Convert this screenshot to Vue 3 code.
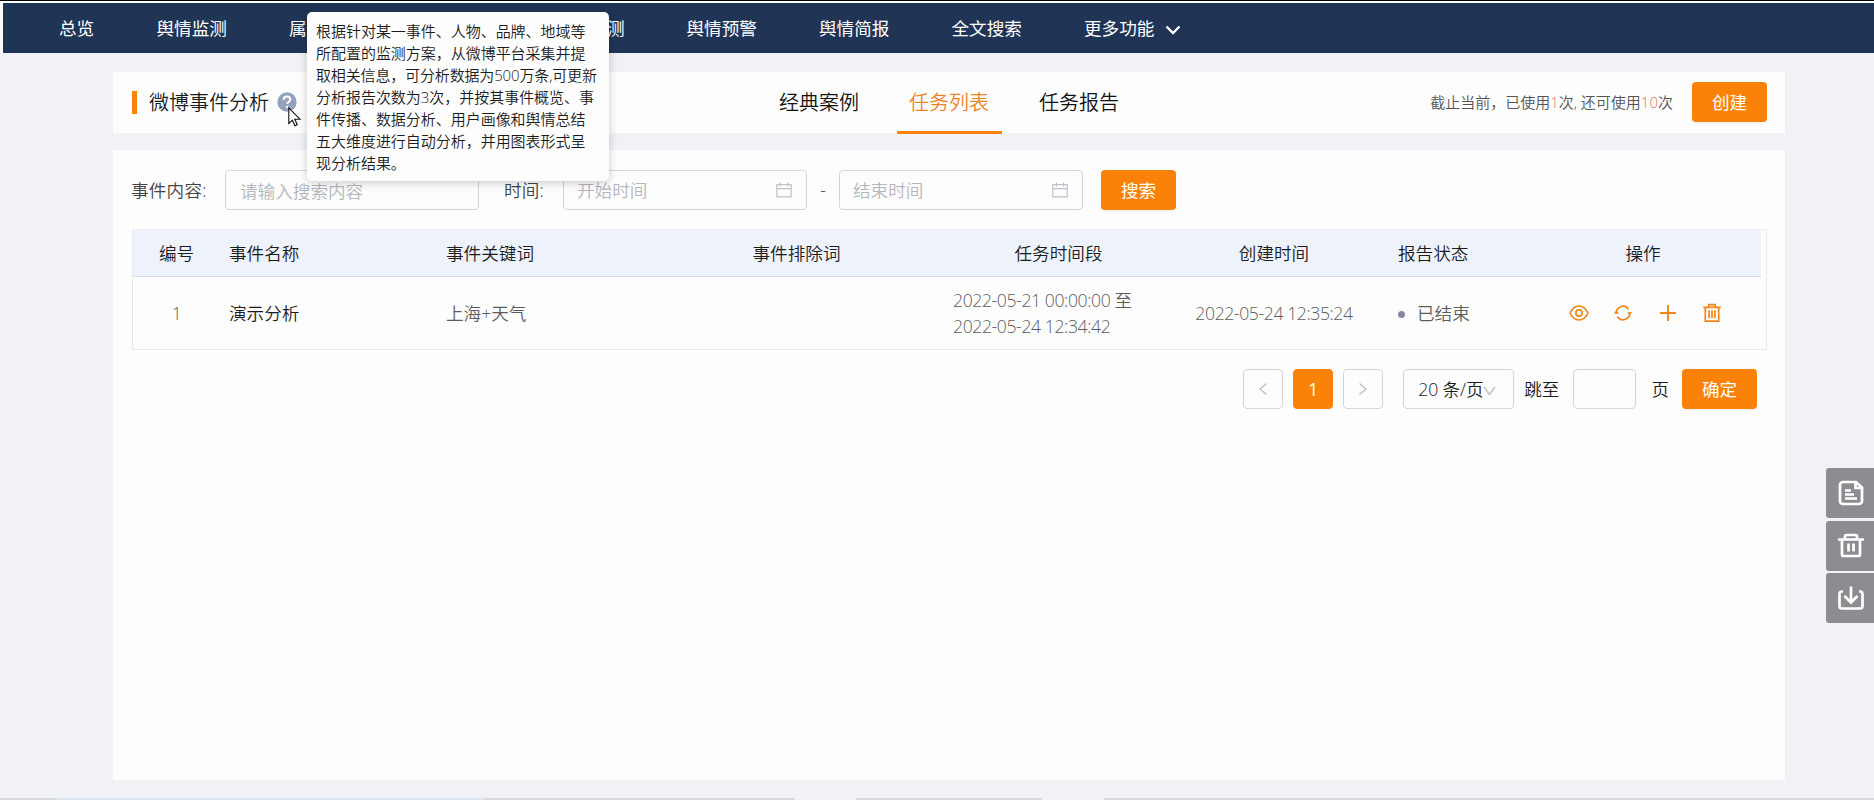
<script setup>
import { ref } from 'vue'

const tabs = ['经典案例', '任务列表', '任务报告']
const activeTab = ref('任务列表')

const tipLines = [
    '根据针对某一事件、人物、品牌、地域等',
    '所配置的监测方案，从微博平台采集并提',
    '取相关信息，可分析数据为500万条,可更新',
    '分析报告次数为3次，并按其事件概览、事',
    '件传播、数据分析、用户画像和舆情总结',
    '五大维度进行自动分析，并用图表形式呈',
    '现分析结果。'
]

const rows = [
    {
        id: 1,
        name: '演示分析',
        keyword: '上海+天气',
        exclude: '',
        start: '2022-05-21 00:00:00',
        end: '2022-05-24 12:34:42',
        created: '2022-05-24 12:35:24',
        status: '已结束'
    }
]
</script>

<template>
    <div class="page">
        <div class="topLine"></div>
        <nav class="nav">
            <a class="navItem short">总览</a>
            <a class="navItem">舆情监测</a>
            <a class="navItem">属</a>
            <a class="navItem"></a>
            <a class="navItem end">测</a>
            <a class="navItem">舆情预警</a>
            <a class="navItem">舆情简报</a>
            <a class="navItem">全文搜索</a>
            <a class="navItem">更多功能
                <svg class="navArrow" width="16" height="10" viewBox="0 0 16 10"><path d="M1.5 1.5 8 8l6.5-6.5" fill="none" stroke="#fff" stroke-width="2.4" /></svg>
            </a>
        </nav>

        <header class="head">
            <i class="bar"></i>
            <h1 class="title">微博事件分析</h1>
            <div class="help">
                <svg width="20" height="20" viewBox="0 0 20 20">
                    <circle cx="10" cy="10" r="9.7" fill="#94a2bd" />
                    <path d="M6.7 7.8C6.7 5.7 8.1 4.4 10 4.4s3.300 1.200 3.300 3c0 2.300-3.100 2.400-3.100 4.700" fill="none" stroke="#fff" stroke-width="2" />
                    <circle cx="10.2" cy="15" r="1.3" fill="#fff" />
                </svg>
                <svg class="cursor" width="13" height="20" viewBox="0 0 13 20"><path d="M.8.9v15.6l3.600-3.400 2.500 5.700 2.400-1-2.500-5.600h5.100z" fill="#fff" stroke="#111" stroke-width="1.1" /></svg>
                <div class="tip">
                    <p v-for="line in tipLines" :key="line">{{ line }}</p>
                </div>
            </div>
            <div class="tabs">
                <a v-for="tab in tabs" :key="tab" class="tab" :class="{ active: tab === activeTab }" @click="activeTab = tab">{{ tab }}</a>
            </div>
            <p class="quota">截止当前，已使用<em>1</em>次, 还可使用<em>10</em>次</p>
            <button class="btn">创建</button>
        </header>

        <main class="main">
            <div class="search">
                <label class="label first">事件内容:</label>
                <div class="input keyword">请输入搜索内容</div>
                <label class="label second">时间:</label>
                <div class="input date">开始时间
                    <svg width="16" height="16" viewBox="0 0 16 16" fill="none" stroke="#bfc1c8" stroke-width="1.2"><path d="M.8 2.600h14.400v12.200H.8zM.8 6.600h14.400M4.400.4v4M11.600.4v4" /></svg>
                </div>
                <span class="dash">-</span>
                <div class="input date">结束时间
                    <svg width="16" height="16" viewBox="0 0 16 16" fill="none" stroke="#bfc1c8" stroke-width="1.2"><path d="M.8 2.600h14.400v12.200H.8zM.8 6.600h14.400M4.400.4v4M11.600.4v4" /></svg>
                </div>
                <button class="btn">搜索</button>
            </div>

            <div class="table">
                <div class="row thead">
                    <span class="center">编号</span>
                    <span>事件名称</span>
                    <span>事件关键词</span>
                    <span class="center">事件排除词</span>
                    <span class="center">任务时间段</span>
                    <span class="center">创建时间</span>
                    <span class="status">报告状态</span>
                    <span class="center">操作</span>
                </div>
                <div v-for="row in rows" :key="row.id" class="row tbody">
                    <span class="center num">{{ row.id }}</span>
                    <span class="dark">{{ row.name }}</span>
                    <span>{{ row.keyword }}</span>
                    <span class="center">{{ row.exclude }}</span>
                    <span class="period">{{ row.start }} 至<br>{{ row.end }}</span>
                    <span class="center num">{{ row.created }}</span>
                    <span class="status"><i class="dot"></i>{{ row.status }}</span>
                    <span class="actions">
                        <svg width="20" height="20" viewBox="0 0 20 20"><path d="M1 10C3.200 5.500 6.200 3 10 3s6.800 2.500 9 7c-2.200 4.500-5.200 7-9 7S3.200 14.500 1 10z" /><circle cx="10" cy="10" r="3.100" /></svg>
                        <svg width="20" height="20" viewBox="0 0 20 20"><path d="M3.300 10.500a6.700 6.700 0 0 1 12.200-4.300M16.700 9.500a6.700 6.700 0 0 1-12.200 4.300" /><path class="solid" d="M.9 10.700h5L3.300 7.600zM14.100 9.300h5l-2.400 3.100z" /></svg>
                        <svg width="20" height="20" viewBox="0 0 20 20"><path d="M10 2v16M2 10h16" stroke-width="1.900" /></svg>
                        <svg width="20" height="20" viewBox="0 0 20 20"><path d="M1.300 4.400h17.400M6.800 4.400V1.700h6.400v2.700M3.300 4.400v13.800h13.400V4.400M7.100 7.300v8M10 7.300v8M12.900 7.300v8" /></svg>
                    </span>
                </div>
            </div>

            <div class="pager">
                <a class="pageBtn"><svg width="10" height="14" viewBox="0 0 10 14"><path d="M8.500 1.500 2 7l6.500 5.500" /></svg></a>
                <a class="pageBtn current">1</a>
                <a class="pageBtn"><svg width="10" height="14" viewBox="0 0 10 14"><path d="M1.500 1.500 8 7l-6.500 5.500" /></svg></a>
                <div class="size">20 条/页<svg width="13" height="10" viewBox="0 0 13 10"><path d="M1 1l5.500 7.500L12 1" /></svg></div>
                <span class="jump">跳至</span>
                <div class="pageInput"></div>
                <span class="unit">页</span>
                <button class="btn">确定</button>
            </div>
        </main>

        <aside class="side">
            <a><svg width="28" height="28" viewBox="0 0 28 28"><path d="M6 3h13l6 5.500V22a3 3 0 0 1-3 3H6a3 3 0 0 1-3-3V6a3 3 0 0 1 3-3zM18.500 3.500v5.500H25M8 11.500h6M8 15.500h9M8 19.500h12" /></svg></a>
            <a><svg width="28" height="28" viewBox="0 0 28 28"><path d="M1 7.500h26M8 7.500V4.500a1.500 1.500 0 0 1 1.500-1.500h9A1.500 1.500 0 0 1 20 4.500v3M5 8v14.500a1.500 1.500 0 0 0 1.500 1.500h15a1.500 1.500 0 0 0 1.500-1.500V8M11.500 11.500v8M16.500 11.500v8" /></svg></a>
            <a><svg width="28" height="28" viewBox="0 0 28 28"><path d="M6 7.500H5a2.500 2.500 0 0 0-2.500 2.500v12A2.500 2.500 0 0 0 5 24.500h18a2.500 2.500 0 0 0 2.500-2.500V10A2.500 2.500 0 0 0 23 7.500h-1M14 2.500v15M7.500 12l6.500 6.500 6.500-6.500" /></svg></a>
        </aside>

        <div class="bottomLine"></div>
    </div>
</template>

<style>
body {
    margin: 0;
    overflow: hidden;
}
</style>

<style scoped>
* {
    box-sizing: border-box;
}
.page {
    position: relative;
    width: 1874px;
    height: 800px;
    display: flex;
    flex-direction: column;
    background: #f0f2f6;
    font-family: "Open Sans", "Noto Sans CJK SC", sans-serif;
    font-size: 17.6px;
    font-weight: 350;
    color: #1c1c1c;
    overflow: hidden;
}
h1, p {
    margin: 0;
}
.topLine {
    height: 3px;
    flex-shrink: 0;
    background: #fdfdfe;
    border-top: 1px solid #050505;
}
.nav {
    height: 50px;
    flex-shrink: 0;
    margin-left: 3px;
    padding: 0 0 2px 56px;
    display: flex;
    align-items: center;
    gap: 62px;
    background: #203556;
    box-shadow: -3px 0 0 #fdfdfe;
    color: #fff;
    font-weight: 400;
}
.navItem {
    display: flex;
    align-items: center;
    width: 70.5px;
    white-space: nowrap;
}
.navItem.short {
    width: 35.5px;
}
.navItem.end {
    justify-content: flex-end;
}
.navArrow {
    flex-shrink: 0;
    margin: 5px 0 0 11px;
}
.head {
    width: 1672px;
    height: 61px;
    flex-shrink: 0;
    margin: 19px 0 0 113px;
    padding: 0 18px 0 19px;
    display: flex;
    align-items: center;
    background: #fdfdfe;
}
.bar {
    width: 5px;
    height: 27px;
    margin-top: -1px;
    border: solid #fdfdfe;
    border-width: 2px 0;
    background: #fb8208;
}
.title {
    width: 128px;
    margin-left: 12px;
    font-size: 20px;
    font-weight: 350;
    line-height: 28px;
    white-space: nowrap;
}
.help {
    position: relative;
    width: 20px;
    height: 20px;
    margin-top: -2px;
}
.help svg {
    display: block;
}
.help .cursor {
    position: absolute;
    left: 11px;
    top: 15px;
    z-index: 3;
}
.tip {
    position: absolute;
    left: 30px;
    top: -80px;
    z-index: 2;
    width: 302px;
    height: 169px;
    padding: 8px 9px;
    border-radius: 5px;
    background: #fdfdfe;
    box-shadow: 0 2px 10px rgba(0, 0, 0, 0.2);
    font-size: 15px;
    line-height: 22px;
    letter-spacing: -0.03px;
    white-space: nowrap;
}
/* latin digits sit a little wide next to the 15px glyphs */
.tip p:nth-child(3) {
    letter-spacing: -0.15px;
}
.tabs {
    align-self: stretch;
    display: flex;
    gap: 25px;
    margin-left: 470px;
}
.tab {
    width: 105px;
    height: 62px;
    padding-right: 1px;
    line-height: 61px;
    text-align: center;
    font-size: 20px;
    color: #111;
}
.tab.active {
    color: #ee8427;
    border-bottom: 3px solid #fb8208;
}
.quota {
    margin-left: auto;
    margin-right: 19px;
    padding-bottom: 3px;
    font-size: 15px;
    color: #555;
}
.quota em {
    font-style: normal;
    color: #e5705f;
}
.btn {
    width: 75px;
    height: 40px;
    flex-shrink: 0;
    padding: 0;
    border: none;
    border-radius: 4px;
    background: #fb8208;
    color: #fff;
    font: inherit;
    font-size: 17.6px;
    font-weight: 400;
    line-height: 38px;
    box-shadow: 0 2px 1px rgba(0, 0, 0, 0.04);
}
.head .btn {
    margin-bottom: 1px;
}
.main {
    width: 1672px;
    height: 630px;
    flex-shrink: 0;
    margin: 17px 0 0 113px;
    padding: 20px 18px 0 19px;
    background: #fdfdfe;
}
.search {
    display: flex;
    height: 40px;
    line-height: 40px;
    color: #444;
}
.label {
    letter-spacing: 0.2px;
    text-indent: -1px;
}
.first {
    width: 93px;
}
.second {
    width: 58px;
    margin-left: 26px;
}
.input {
    height: 40px;
    padding: 0 14px;
    border: 1px solid #d5d6dc;
    border-radius: 4px;
    line-height: 40px;
    color: #b5b6bd;
}
.keyword {
    width: 254px;
}
.date {
    width: 244px;
    padding-left: 13px;
    display: flex;
    align-items: center;
    justify-content: space-between;
}
.dash {
    width: 32px;
    text-align: center;
}
.search .btn {
    margin-left: 18px;
}
.table {
    height: 121px;
    margin-top: 19px;
    border: 1px solid #e5e6ef;
    border-top-color: #eef0f6;
}
.row {
    width: 1628px;
    display: grid;
    grid-template-columns: 87px 217px 212px 295px 229px 202px 150px 236px;
    align-items: center;
}
.row > span {
    padding: 0 9px;
    white-space: nowrap;
}
.thead {
    height: 47px;
    padding-bottom: 1px;
    background: #eef2fb;
    border-bottom: 1px solid #d9dcec;
}
.tbody {
    height: 72px;
    padding-bottom: 1px;
    color: #5c5c5c;
}
.row .center {
    text-align: center;
}
.num, .period {
    letter-spacing: -0.4px;
}
.period {
    line-height: 26px;
}
.dark {
    color: #1c1c1c;
}
.row .status {
    padding-left: 23px;
}
.dot {
    display: inline-block;
    width: 7px;
    height: 7px;
    margin-right: 12px;
    border-radius: 50%;
    background: #8688a0;
    vertical-align: 2px;
}
.row .actions {
    display: flex;
    gap: 24.3px;
    padding: 0 0 0 44px;
}
.actions svg {
    fill: none;
    stroke: #f08519;
    stroke-width: 1.7;
}
.actions .solid {
    fill: #f08519;
    stroke: none;
}
.pager {
    display: flex;
    justify-content: flex-end;
    margin-top: 19px;
    padding-right: 10px;
    line-height: 40px;
}
.pageBtn {
    width: 40px;
    height: 40px;
    margin-right: 10px;
    display: flex;
    align-items: center;
    justify-content: center;
    border: 1px solid #d5d6dc;
    border-radius: 4px;
}
.pageBtn.current {
    border-color: #fb8208;
    background: #fb8208;
    color: #fff;
    font-weight: 400;
}
.pager svg {
    fill: none;
    stroke: #bfc0cb;
    stroke-width: 1.5;
}
.size {
    width: 111px;
    height: 40px;
    margin-left: 10px;
    padding-left: 14px;
    border: 1px solid #d5d6dc;
    border-radius: 4px;
    line-height: 38px;
    letter-spacing: -0.1px;
    white-space: nowrap;
}
.jump {
    margin-left: 10px;
}
.pageInput {
    width: 63px;
    height: 40px;
    margin: 0 15px 0 14px;
    border: 1px solid #d5d6dc;
    border-radius: 4px;
}
.unit {
    margin-right: 13px;
}
.side {
    position: absolute;
    right: 0;
    top: 468px;
    display: flex;
    flex-direction: column;
    gap: 2.5px;
}
.side a {
    width: 48px;
    height: 50px;
    padding-left: 2px;
    display: flex;
    align-items: center;
    justify-content: center;
    border-radius: 3px 0 0 3px;
    background: #8b8d91;
}
.side svg {
    fill: none;
    stroke: #fff;
    stroke-width: 2.7;
}
.bottomLine {
    height: 2px;
    margin-top: auto;
    background: linear-gradient(90deg, #d8d8de 0 56px, #dbe6f3 56px 484px, #d8d8de 484px 795px, #f0f2f6 795px 856px, #d8d8de 856px 1042px, #f0f2f6 1042px 1104px, #d8d8de 1104px);
}
</style>
